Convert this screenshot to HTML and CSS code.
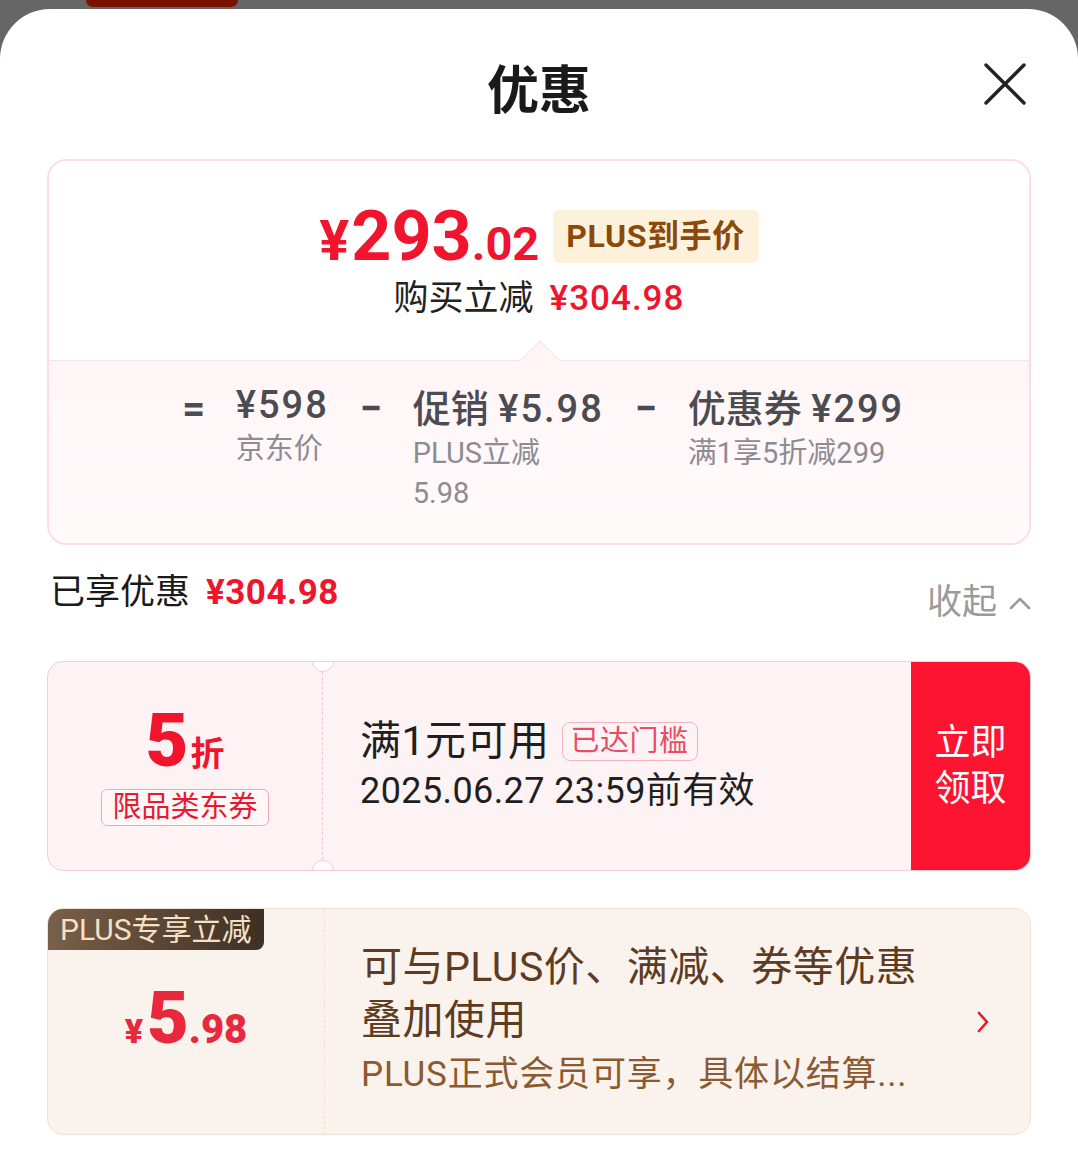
FILE: index.html
```html
<!DOCTYPE html>
<html lang="zh-CN">
<head>
<meta charset="utf-8">
<title>优惠</title>
<link rel="stylesheet" href="styles.css">
</head>
<body>
<div class="topbar"><div class="topbar-shape"></div></div>
<div class="sheet">
  <header class="header">
    <div></div>
    <h1 class="title">优惠</h1>
    <button class="close" aria-label="关闭">
      <svg width="44" height="44" viewBox="0 0 44 44"><path d="M3 3 L41 41 M41 3 L3 41" stroke="#222" stroke-width="3.4" stroke-linecap="round" fill="none"/></svg>
    </button>
  </header>

  <section class="price-card">
    <div class="price-top">
      <div class="price-row">
        <span class="price"><span class="price-yen">¥</span><span class="price-int">293</span><span class="price-dec">.02</span></span>
        <span class="plus-badge">PLUS到手价</span>
      </div>
      <div class="save-line">购买立减<span class="save-amt">¥304.98</span></div>
    </div>
    <div class="price-bottom">
      <div class="notch"></div>
      <div class="formula">
        <span class="op op-eq">=</span>
        <div class="term term-first">
          <div class="term-title"><span class="num">¥598</span></div>
          <div class="term-sub">京东价</div>
        </div>
        <span class="op">−</span>
        <div class="term">
          <div class="term-title">促销 <span class="num">¥5.98</span></div>
          <div class="term-sub">PLUS立减<br>5.98</div>
        </div>
        <span class="op">−</span>
        <div class="term">
          <div class="term-title">优惠券 <span class="num">¥299</span></div>
          <div class="term-sub">满1享5折减299</div>
        </div>
      </div>
    </div>
  </section>

  <div class="saved-row">
    <div class="saved-label">已享优惠<span class="saved-amt">¥304.98</span></div>
    <div class="collapse">收起
      <svg width="22" height="14" viewBox="0 0 22 14"><path d="M2 12 L11 3 L20 12" stroke="#9a9a9a" stroke-width="2.6" fill="none" stroke-linecap="round" stroke-linejoin="round"/></svg>
    </div>
  </div>

  <div class="coupon">
    <div class="coupon-left">
      <div class="coupon-discount"><span class="disc-num">5</span><span class="disc-unit">折</span></div>
      <div class="coupon-type">限品类东券</div>
      <span class="notch-circle notch-top"></span>
      <span class="notch-circle notch-bottom"></span>
    </div>
    <div class="coupon-main">
      <div class="coupon-cond">满1元可用<span class="coupon-tag">已达门槛</span></div>
      <div class="coupon-date">2025.06.27 23:59前有效</div>
    </div>
    <div class="coupon-btn">立即领取</div>
  </div>

  <div class="plus-card">
    <div class="plus-tag">PLUS专享立减</div>
    <div class="plus-left">
      <span class="plus-price"><span class="pp-yen">¥</span><span class="pp-int">5</span><span class="pp-dec">.98</span></span>
    </div>
    <div class="plus-main">
      <div class="plus-desc">可与PLUS价、满减、券等优惠<br>叠加使用</div>
      <div class="plus-note">PLUS正式会员可享，具体以结算...</div>
    </div>
    <svg class="plus-arrow" width="14" height="24" viewBox="0 0 14 24"><path d="M3 3 L11 12 L3 21" stroke="#e8192c" stroke-width="2.6" fill="none" stroke-linecap="round" stroke-linejoin="round"/></svg>
  </div>
</div>
</body>
</html>
```

FILE: styles.css
```css
* { box-sizing: border-box; }

body {
  margin: 0;
  background: #666666;
  font-family: Roboto, "Noto Sans CJK SC", sans-serif;
  color: #1f1f1f;
}

.topbar { height: 9px; overflow: hidden; }
.topbar-shape {
  margin-left: 86px;
  width: 152px;
  height: 7px;
  background: #7a1000;
  border-radius: 0 0 24px 24px;
}

.sheet {
  background: #ffffff;
  border-radius: 50px 50px 0 0;
  padding: 0 47px;
  min-height: 1159px;
}

/* header */
.header {
  display: grid;
  grid-template-columns: 1fr auto 1fr;
  height: 150px;
  align-items: start;
}
.title {
  margin: 0;
  padding-top: 52px;
  font-family: "Noto Sans CJK SC", sans-serif;
  font-size: 52px;
  line-height: 52px;
  font-weight: 700;
  color: #1a1a1a;
}
.close {
  justify-self: end;
  margin: 53px 4px 0 0;
  padding: 0;
  border: 0;
  background: none;
  width: 44px;
  height: 44px;
}
.close svg { display: block; }

/* price card */
.price-card {
  border: 2px solid #fcdde5;
  border-radius: 20px;
  overflow: hidden;
}
.price-top {
  height: 199px;
  display: flex;
  flex-direction: column;
  align-items: center;
  padding-top: 38px;
  background: #ffffff;
}
.price-row {
  display: flex;
  align-items: flex-start;
  gap: 14px;
  height: 74px;
}
.price {
  color: #f0142d;
  font-weight: 700;
  line-height: 74px;
  white-space: nowrap;
}
.price-yen { font-size: 56px; margin-right: 2px; }
.price-int { font-size: 70px; letter-spacing: 0; }
.price-dec { font-size: 47px; }
.plus-badge {
  background: #fef1dc;
  color: #8a4a0b;
  font-size: 32px;
  font-weight: 700;
  line-height: 53px;
  height: 53px;
  padding: 0 14px 0 13px;
  border-radius: 6px;
  margin-top: 11px;
  letter-spacing: 0.6px;
}
.save-line {
  margin-top: 6px;
  font-size: 35px;
  line-height: 40px;
  color: #222222;
}
.save-amt {
  color: #f0142d;
  font-weight: 500;
  margin-left: 16px;
  font-size: 35px;
  letter-spacing: 1px;
}

.price-bottom {
  position: relative;
  border-top: 1px solid #fbe2e8;
  background: linear-gradient(180deg, #fff5f7 0%, #fffafb 100%);
  height: 183px;
  padding-top: 22px;
}
.notch {
  position: absolute;
  left: 477px;
  top: -15px;
  width: 28px;
  height: 28px;
  background: #fff5f7;
  border-top: 1px solid #fbe2e8;
  border-left: 1px solid #fbe2e8;
  transform: rotate(45deg);
}
.formula {
  display: flex;
  justify-content: center;
  align-items: flex-start;
  gap: 30px;
  color: #4b4b50;
  padding-left: 8px;
}
.op {
  font-size: 40px;
  font-weight: 700;
  line-height: 44px;
  width: 24px;
  text-align: center;
  margin-top: 4px;
}
.term {
  display: flex;
  flex-direction: column;
  margin-top: 4px;
}
.term-first { margin-top: 0; }
.term-title {
  font-size: 38px;
  line-height: 44px;
  font-weight: 500;
  white-space: nowrap;
}
.num { letter-spacing: 2px; }
.term-sub {
  font-size: 29px;
  line-height: 40px;
  color: #8c8c92;
  margin-top: 2px;
  white-space: nowrap;
}

/* saved row */
.saved-row {
  display: flex;
  justify-content: space-between;
  align-items: flex-start;
  padding-top: 28px;
  height: 80px;
  margin-bottom: 36px;
}
.saved-label {
  font-size: 35px;
  line-height: 40px;
  color: #1a1a1a;
  padding-left: 3px;
}
.saved-amt {
  color: #f0142d;
  font-weight: 700;
  margin-left: 16px;
  letter-spacing: 0.5px;
}
.collapse {
  display: flex;
  align-items: center;
  gap: 12px;
  font-size: 35px;
  line-height: 40px;
  color: #9a9a9a;
  margin-top: 10px;
}

/* coupon */
.coupon {
  position: relative;
  display: flex;
  height: 210px;
  border: 1.5px solid #f6ccd6;
  border-radius: 16px;
  background: #fdf3f5;
  overflow: hidden;
}
.coupon-left {
  position: relative;
  width: 275px;
  flex: none;
  display: flex;
  flex-direction: column;
  align-items: center;
  justify-content: center;
  border-right: 1.5px dashed #f4c8d1;
  padding-top: 4px;
}
.notch-circle {
  position: absolute;
  right: -12px;
  width: 22px;
  height: 22px;
  border-radius: 50%;
  background: #ffffff;
  border: 1.5px solid #f6ccd6;
}
.notch-top { top: -12px; }
.notch-bottom { bottom: -12px; }
.coupon-discount {
  color: #f0142d;
  font-weight: 900;
  line-height: 60px;
  display: flex;
  align-items: baseline;
}
.disc-num { font-size: 74px; }
.disc-unit { font-size: 34px; font-weight: 700; margin-left: 2px; }
.coupon-type {
  margin-top: 5px;
  border: 1px solid #f2a8b6;
  border-radius: 6px;
  color: #e8182f;
  font-size: 29px;
  line-height: 35px;
  padding: 0 10px;
  background: #fff6f8;
}
.coupon-main {
  flex: 1;
  display: flex;
  flex-direction: column;
  justify-content: center;
  padding-left: 37px;
  padding-bottom: 2px;
}
.coupon-cond {
  display: flex;
  align-items: center;
  font-size: 41px;
  line-height: 52px;
  color: #1f1f1f;
  letter-spacing: 0.5px;
}
.coupon-tag {
  margin-left: 12px;
  border: 1.5px solid #f4b3c0;
  border-radius: 8px;
  color: #ec4c63;
  font-size: 29px;
  line-height: 37px;
  padding: 0 8px;
  letter-spacing: 0.5px;
}
.coupon-date {
  font-size: 36px;
  line-height: 48px;
  color: #1f1f1f;
  letter-spacing: 0.4px;
}
.coupon-btn {
  width: 119px;
  flex: none;
  background: #fc1431;
  color: #ffffff;
  font-size: 36px;
  line-height: 46px;
  display: flex;
  align-items: center;
  justify-content: center;
  text-align: center;
  padding: 0 22px;
}

/* plus card */
.plus-card {
  position: relative;
  margin-top: 37px;
  display: flex;
  align-items: center;
  height: 227px;
  border: 1.5px solid #f0e1d3;
  border-radius: 16px;
  background: #faf3ed;
  overflow: hidden;
}
.plus-tag {
  position: absolute;
  left: 0;
  top: 0;
  height: 41px;
  line-height: 41px;
  padding: 0 12px 0 12px;
  font-size: 30px;
  color: #f7e0c6;
  background: linear-gradient(90deg, #7a6049 0%, #3e2f24 100%);
  border-radius: 0 0 8px 0;
}
.plus-left {
  width: 277px;
  align-self: stretch;
  flex: none;
  display: flex;
  align-items: center;
  justify-content: center;
  border-right: 1.5px dashed #ebdfd4;
  padding-top: 14px;
}
.plus-price {
  color: #e8283c;
  font-weight: 900;
  line-height: 70px;
}
.pp-yen { font-size: 34px; margin-right: 4px; }
.pp-int { font-size: 72px; }
.pp-dec { font-size: 40px; }
.plus-main {
  flex: 1;
  padding-left: 36px;
  display: flex;
  flex-direction: column;
  justify-content: center;
}
.plus-desc {
  font-size: 41px;
  line-height: 53px;
  color: #5d3c22;
  letter-spacing: 0.5px;
}
.plus-note {
  font-size: 35px;
  line-height: 56px;
  color: #8c5a30;
  white-space: nowrap;
  letter-spacing: 0.8px;
}
.plus-arrow {
  flex: none;
  margin-right: 40px;
}
```
